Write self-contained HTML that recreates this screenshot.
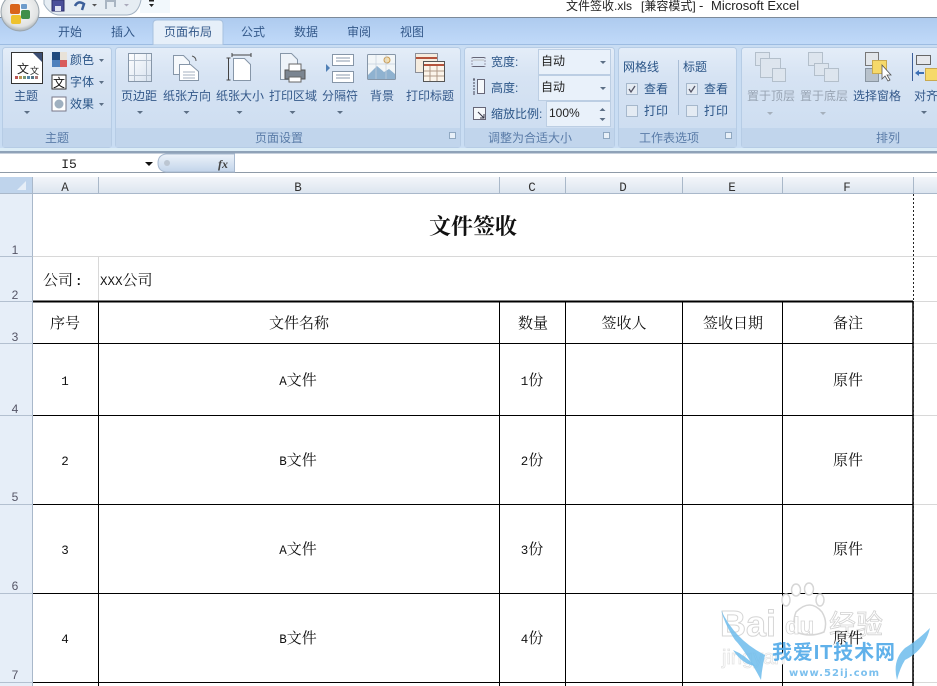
<!DOCTYPE html>
<html><head><meta charset="utf-8"><style>
html,body{margin:0;padding:0;background:#fff}
svg{display:block}
text{font-family:"Liberation Sans","Noto Sans CJK SC",sans-serif}
.r{font-size:12px;fill:#2b5587}
.t{font-size:12px;fill:#34598a;text-anchor:middle}
.g{font-size:12px;fill:#5a7ca8;text-anchor:middle}
.d{font-size:12px;fill:#98a4b3;text-anchor:middle}
.c{font-size:15px;fill:#111;text-anchor:middle;font-family:"Noto Serif CJK SC",serif}
.c tspan{font-family:"Liberation Mono",monospace;font-size:12.500px}
.h{font-size:12.500px;fill:#333;text-anchor:middle;font-family:"Liberation Mono",monospace}
.n{font-size:12px;fill:#556;text-anchor:middle}
</style></head><body>
<svg width="937" height="686" viewBox="0 0 937 686" xmlns="http://www.w3.org/2000/svg">
<defs>
<linearGradient id="grp" x1="0" y1="0" x2="0" y2="1"><stop offset="0" stop-color="#e4edf8"/><stop offset=".3" stop-color="#d6e3f3"/><stop offset="1" stop-color="#cbdcf0"/></linearGradient>
<linearGradient id="tabs" x1="0" y1="0" x2="0" y2="1"><stop offset="0" stop-color="#aecbef"/><stop offset="1" stop-color="#c1daf9"/></linearGradient>
<linearGradient id="hdr" x1="0" y1="0" x2="0" y2="1"><stop offset="0" stop-color="#f3f6fa"/><stop offset="1" stop-color="#dbe4ef"/></linearGradient>
<linearGradient id="fx" x1="0" y1="0" x2="0" y2="1"><stop offset="0" stop-color="#edf3fa"/><stop offset="1" stop-color="#c2d4ea"/></linearGradient>
<linearGradient id="pg" x1="0" y1="0" x2="1" y2="1"><stop offset="0" stop-color="#fff"/><stop offset="1" stop-color="#d7e2ef"/></linearGradient>
<radialGradient id="orb" cx=".5" cy=".4" r=".6"><stop offset="0" stop-color="#fff"/><stop offset=".8" stop-color="#e0e2e2"/><stop offset="1" stop-color="#a5aeb5"/></radialGradient>
</defs>

<!-- title bar -->
<rect width="937" height="17" fill="#fff"/>
<rect x="140" y="0" width="30" height="13" fill="#f2f8fc"/>
<text x="566" y="10" font-size="12" fill="#222">文件签收.xls</text>
<text x="641" y="10" font-size="12" fill="#222">[兼容模式]</text>
<text x="699" y="10" font-size="13" fill="#222">-</text>
<text x="711" y="10" font-size="13" fill="#222">Microsoft Excel</text>
<path d="M44 0V4Q50 15 60 15H126Q138 15 141 0" fill="#e6edf3" stroke="#a3b2c2"/>
<rect x="52" y="0" width="12" height="11" fill="#4a4f9a" stroke="#2c2f6a"/><rect x="55" y="6" width="6" height="5" fill="#dfe3f2"/>
<path d="M75 6Q78 0 84 4L82 10" fill="none" stroke="#3c5f9a" stroke-width="2.500"/>
<path d="M92 4h5l-2.500 2.500z" fill="#555"/>
<path d="M106 9V1h9v6" fill="none" stroke="#a9b5c2" stroke-width="2"/>
<path d="M124 4h5l-2.500 2.500z" fill="#aab"/>
<rect x="149" y="0" width="5" height="1.500" fill="#222"/><path d="M149 4h5l-2.500 3z" fill="#222"/>
<rect y="17" width="937" height="1" fill="#7d8a99"/>

<!-- tab strip -->
<rect y="18" width="937" height="27" fill="url(#tabs)"/>
<rect y="44" width="937" height="1" fill="#9dbce2"/>
<path d="M153 45V24Q153 20 157 20H219Q223 20 223 24V45Z" fill="#e6eff9" stroke="#a7c1df"/>
<text class="t" x="70" y="36">开始</text><text class="t" x="123" y="36">插入</text><text class="t" x="188" y="36">页面布局</text><text class="t" x="253" y="36">公式</text><text class="t" x="306" y="36">数据</text><text class="t" x="359" y="36">审阅</text><text class="t" x="412" y="36">视图</text>

<!-- office orb -->
<circle cx="20" cy="12" r="19" fill="url(#orb)" stroke="#9aa5ad"/>
<rect x="10" y="4" width="10" height="10" rx="2" fill="#d9651c"/><rect x="21" y="10" width="9" height="9" rx="2" fill="#3f8f4a"/><rect x="11" y="15" width="10" height="9" rx="2" fill="#eec22e"/><rect x="21" y="4" width="6" height="5" rx="1" fill="#6f9ccb"/>

<!-- ribbon body -->
<rect y="45" width="937" height="106" fill="#c9ddf3"/>
<rect y="151" width="937" height="2.500" fill="#8fa2b8"/>
<rect y="148" width="937" height="3" fill="#dcedf7"/>

<!-- groups -->
<g stroke="#b6cce5" fill="url(#grp)">
<rect x="2.500" y="47.500" width="109" height="100" rx="3"/>
<rect x="115.500" y="47.500" width="345" height="100" rx="3"/>
<rect x="464.500" y="47.500" width="150" height="100" rx="3"/>
<rect x="618.500" y="47.500" width="118" height="100" rx="3"/>
<rect x="741.500" y="47.500" width="200" height="100" rx="3"/>
</g>
<g fill="#c1d5ec">
<rect x="3" y="128" width="108" height="19"/><rect x="116" y="128" width="344" height="19"/><rect x="465" y="128" width="149" height="19"/><rect x="619" y="128" width="117" height="19"/><rect x="742" y="128" width="195" height="19"/>
</g>
<text class="g" x="57" y="142">主题</text><text class="g" x="279" y="142">页面设置</text><text class="g" x="530" y="142">调整为合适大小</text><text class="g" x="669" y="142">工作表选项</text><text class="g" x="888" y="142">排列</text>
<g fill="#e8f0f8" stroke="#7f99b5" stroke-width=".8"><rect x="449.500" y="132.500" width="6" height="6"/><rect x="603.500" y="132.500" width="6" height="6"/><rect x="725.500" y="132.500" width="6" height="6"/></g>

<!-- theme -->
<rect x="11.500" y="52.500" width="31" height="31" fill="#fff" stroke="#333"/>
<path d="M33 53h9v9z" fill="#3c4f75"/>
<text x="17" y="73" font-size="12" fill="#222">文</text><text x="30" y="74" font-size="9" fill="#222">文</text>
<g><rect x="15" y="76" width="3" height="3" fill="#b55"/><rect x="19" y="76" width="3" height="3" fill="#b95"/><rect x="23" y="76" width="3" height="3" fill="#797"/><rect x="27" y="76" width="3" height="3" fill="#58a"/><rect x="31" y="76" width="3" height="3" fill="#578"/><rect x="35" y="76" width="3" height="3" fill="#a77"/></g>
<text class="t" x="26" y="100">主题</text>
<path d="M24 111h6l-3 3z" fill="#5c6f85"/>
<rect x="52" y="52" width="15" height="15" fill="#d85c5c"/><rect x="52" y="52" width="8" height="8" fill="#1f497d"/><rect x="60" y="52" width="7" height="8" fill="#e8e2d8"/><rect x="52" y="60" width="8" height="7" fill="#4f81bd"/>
<text class="r" x="70" y="64">颜色</text><path d="M99 59h5l-2.500 3z" fill="#5c6f85"/>
<rect x="52" y="75" width="14" height="14" fill="#fff" stroke="#333"/><text x="53" y="87" font-size="12" fill="#111">文</text>
<text class="r" x="70" y="86">字体</text><path d="M99 81h5l-2.500 3z" fill="#5c6f85"/>
<rect x="52" y="97" width="14" height="14" fill="#fff" stroke="#778"/><circle cx="59" cy="104" r="4.500" fill="#9fb0c0"/>
<text class="r" x="70" y="108">效果</text><path d="M99 103h5l-2.500 3z" fill="#5c6f85"/>

<!-- page setup icons -->
<rect x="128.500" y="53.500" width="23" height="28" fill="url(#pg)" stroke="#8696a8"/><path d="M134.500 54v27M146.500 54v27M129 60.500h22M129 75.500h22" stroke="#b3bfcd" fill="none"/>
<path d="M173.500 55.500h10l6 6v13h-16z" fill="#f6f9fc" stroke="#8696a8"/><path d="M179.500 64.500h11l8 7v9h-19z" fill="#fff" stroke="#8696a8"/><path d="M183 72h12M183 75h12M183 78h12" stroke="#a5b2c2"/><path d="M192 56q4 1 4 5" fill="none" stroke="#555"/>
<path d="M228.500 58v22M226.500 58h4M226.500 80h4M232 55h19M232 53v4M251 53v4" stroke="#444" fill="none"/><path d="M233.500 58.500h11l6 6v16h-17z" fill="#fff" stroke="#8696a8"/>
<path d="M280.500 53.500h11l6 6v20h-17z" fill="#eef3f9" stroke="#8696a8"/><rect x="285" y="70" width="20" height="9" fill="#7b8591" stroke="#555"/><rect x="289" y="64" width="12" height="7" fill="#fff" stroke="#666"/><rect x="289" y="77" width="12" height="5" fill="#fff" stroke="#666"/>
<rect x="332.500" y="54.500" width="21" height="11" fill="#fff" stroke="#8696a8"/><rect x="332.500" y="71.500" width="21" height="11" fill="#fff" stroke="#8696a8"/><path d="M336 58h14M336 61h14M336 75h14M336 78h14" stroke="#8a9aae"/><path d="M326 64l4 4-4 4z" fill="#4f7fb5"/>
<rect x="367.500" y="54.500" width="28" height="25" rx="1" fill="#f2f6f8" stroke="#8696a8"/><path d="M368 75l9-9 7 6 5-3 6 5v5h-27z" fill="#8fb2d0"/><circle cx="387" cy="60" r="3" fill="#f4dfb0" stroke="#c79a55"/><path d="M376 55v24M386 55v24M368 64h27" stroke="#c5d0dc" fill="none" stroke-width=".7"/>
<rect x="415.500" y="53.500" width="22" height="19" fill="#f5ecdf" stroke="#8c8f98"/><path d="M416 58h21" stroke="#b5533c" stroke-width="2"/><rect x="423.500" y="61.500" width="21" height="20" fill="#fbf4ea" stroke="#555"/><path d="M424 65h20" stroke="#b5533c" stroke-width="2"/><path d="M430 66v15M437 66v15M424 71h20M424 76h20" stroke="#b09a88" fill="none"/>
<text class="t" x="139" y="100">页边距</text><text class="t" x="187" y="100">纸张方向</text><text class="t" x="240" y="100">纸张大小</text><text class="t" x="293" y="100">打印区域</text><text class="t" x="340" y="100">分隔符</text><text class="t" x="382" y="100">背景</text><text class="t" x="430" y="100">打印标题</text>
<g fill="#5c6f85"><path d="M137 111h6l-3 3z"/><path d="M183.500 111h6l-3 3z"/><path d="M236.500 111h6l-3 3z"/><path d="M289.500 111h6l-3 3z"/><path d="M337 111h6l-3 3z"/></g>

<!-- scale group -->
<path d="M472 57.500h13M472 66.500h13" stroke="#667" fill="none"/><path d="M472 57v10M485 57v10" stroke="#99a" stroke-dasharray="2 1"/><path d="M473 60h11" stroke="#bbb"/>
<path d="M473 79h3M473 94h3M474 79v15" stroke="#445" fill="none" stroke-dasharray="2 1"/><rect x="477.500" y="79.500" width="7" height="14" fill="#f5f8fb" stroke="#667"/>
<rect x="473.500" y="107.500" width="12" height="12" fill="#f5f8fb" stroke="#667"/><path d="M478 112l6 6M484 114v4h-4" stroke="#334" fill="none"/>
<text class="r" x="491" y="66">宽度:</text><text class="r" x="491" y="92">高度:</text><text class="r" x="491" y="118">缩放比例:</text>
<g fill="#e9f1fa" stroke="#bccee3"><rect x="538.500" y="49.500" width="72" height="25"/><rect x="538.500" y="75.500" width="72" height="25"/><rect x="546.500" y="101.500" width="64" height="25"/></g>
<text x="541" y="65" font-size="12" fill="#222">自动</text><text x="541" y="91" font-size="12" fill="#222">自动</text><text x="549" y="117" font-size="12" fill="#222">100%</text>
<g fill="#5c6f85"><path d="M600 61h6l-3 3z"/><path d="M600 87h6l-3 3z"/><path d="M599.500 111h6l-3-3z"/><path d="M599.500 118h6l-3 3z"/></g>

<!-- sheet options -->
<text class="r" x="623" y="71">网格线</text><text class="r" x="683" y="71">标题</text>
<path d="M678.500 60v55" stroke="#a9bdd5"/>
<g fill="#e4ebf3" stroke="#a6b8cc"><rect x="626.500" y="83.500" width="11" height="11"/><rect x="626.500" y="105.500" width="11" height="11"/><rect x="686.500" y="83.500" width="11" height="11"/><rect x="686.500" y="105.500" width="11" height="11"/></g>
<path d="M629 89l2 3 4-6M689 89l2 3 4-6" fill="none" stroke="#556" stroke-width="1.300"/>
<text class="r" x="644" y="93">查看</text><text class="r" x="644" y="115">打印</text><text class="r" x="704" y="93">查看</text><text class="r" x="704" y="115">打印</text>

<!-- arrange -->
<g fill="#dde5ee" stroke="#b3bfcb"><rect x="755.500" y="52.500" width="14" height="13"/><rect x="760.500" y="58.500" width="20" height="19"/><rect x="772.500" y="68.500" width="13" height="13"/>
<rect x="808.500" y="52.500" width="14" height="13"/><rect x="814.500" y="63.500" width="14" height="12"/><rect x="824.500" y="68.500" width="14" height="13"/></g>
<rect x="865.500" y="52.500" width="13" height="13" fill="#e2e6ea" stroke="#777"/><rect x="865.500" y="68.500" width="13" height="13" fill="#b8c2cc" stroke="#8a96a2"/><rect x="872.500" y="60.500" width="14" height="13" fill="#f6d96a" stroke="#c9a94f"/>
<path d="M882 65v14l3-3 3 5 2-1-3-5h4z" fill="#fff" stroke="#555" stroke-width=".8"/>
<path d="M912.500 53v28" stroke="#3c5f9a"/><rect x="916.500" y="55.500" width="14" height="9" fill="#e6e8ec" stroke="#666"/><rect x="925.500" y="68.500" width="14" height="12" fill="#f6d96a" stroke="#c9a94f"/><path d="M915 73l4-3v2h5v2h-5v2z" fill="#3c6fb5"/>
<text class="d" x="771" y="100">置于顶层</text><text class="d" x="824" y="100">置于底层</text><text class="t" x="877" y="100">选择窗格</text><text class="t" x="926" y="100">对齐</text>
<path d="M767 112h6l-3 3zM820 112h6l-3 3z" fill="#a5b0bc"/><path d="M921 111h6l-3 3z" fill="#5c6f85"/>

<!-- formula bar -->
<rect y="153.500" width="937" height="18.500" fill="#fff"/>
<rect y="172" width="937" height="1" fill="#8f9ba8"/>
<text x="69" y="168" text-anchor="middle" style="font-family:'Liberation Mono',monospace;font-size:13px" fill="#222">I5</text>
<path d="M145 162h8l-4 4z" fill="#111"/>
<path d="M234.500 154v18H166q-8-1-8-9t8-9z" fill="url(#fx)" stroke="#a9bad0"/>
<circle cx="167" cy="163" r="3" fill="#bcc6d2"/>
<text x="218" y="168" font-size="12" font-style="italic" font-weight="bold" fill="#444" style="font-family:'Liberation Serif',serif">fx</text>

<!-- sheet header -->
<rect y="173" width="937" height="4" fill="#fff"/>
<rect y="177" width="937" height="17" fill="url(#hdr)"/>
<rect y="194" width="33" height="492" fill="#e6eef8"/>
<rect y="177" width="33" height="17" fill="#bfd4ec"/>
<path d="M26 181v9h-9z" fill="#e6eef7"/>
<path d="M0 193.500H937" stroke="#a9b8ca"/>
<path d="M32.500 177V686" stroke="#a9b8ca"/>
<path d="M98.500 177v17M499.500 177v17M565.500 177v17M682.500 177v17M782.500 177v17M913.500 177v17" stroke="#a9b8c9"/>
<text class="h" x="65" y="191">A</text><text class="h" x="298" y="191">B</text><text class="h" x="532" y="191">C</text><text class="h" x="623" y="191">D</text><text class="h" x="732" y="191">E</text><text class="h" x="847" y="191">F</text>
<path d="M0 256.500h33M0 301.500h33M0 343.500h33M0 415.500h33M0 504.500h33M0 593.500h33M0 682.500h33" stroke="#b3c0d0"/>
<text class="n" x="15" y="254">1</text><text class="n" x="15" y="299">2</text><text class="n" x="15" y="341">3</text><text class="n" x="15" y="413">4</text><text class="n" x="15" y="501">5</text><text class="n" x="15" y="590">6</text><text class="n" x="15" y="679">7</text>

<!-- grid -->
<path d="M33 256.500H937M98.500 256V301M913 301.500H937M913 343.500H937M913 415.500H937M913 504.500H937M913 593.500H937M913 682.500H937" stroke="#d8d8d8"/>
<path d="M33 301.500H913" stroke="#000" stroke-width="2"/>
<path d="M33 343.500H913M33 415.500H913M33 504.500H913M33 593.500H913M33 682.500H913M98.500 301V686M499.500 301V686M565.500 301V686M682.500 301V686M782.500 301V686" stroke="#000"/>
<path d="M913 301V686" stroke="#000" stroke-width="1.500"/>
<path d="M913.500 194V686" stroke="#222" stroke-dasharray="2 2"/>

<!-- watermark (behind text) -->
<text x="720" y="636" font-size="36" font-weight="bold" fill="#fff" stroke="#d6d6d6" stroke-width="1">Bai</text>
<path d="M796 612q14-14 26 0q6 10 2 20q-14 6-28 0q-4-10 0-20z" fill="#fff" stroke="#d6d6d6" stroke-width="1.500"/>
<text x="785" y="634" font-size="24" font-weight="bold" fill="#fff" stroke="#d6d6d6" stroke-width=".8">du</text>
<text x="829" y="634" font-size="27" fill="#fff" stroke="#d2d2d2" stroke-width=".8">经验</text>
<text x="722" y="664" font-size="20" fill="#fff" stroke="#e4e4e4" stroke-width=".8">jingyan</text>
<g fill="#fff" stroke="#d6d6d6" stroke-width="1.500"><ellipse cx="786" cy="600" rx="4" ry="6"/><ellipse cx="796" cy="590" rx="4.500" ry="6"/><ellipse cx="809" cy="589" rx="4.500" ry="6"/><ellipse cx="820" cy="600" rx="4" ry="6"/></g>

<!-- cells -->
<text x="473" y="234" text-anchor="middle" font-size="22" font-weight="bold" fill="#111" style="font-family:'Noto Serif CJK SC',serif">文件签收</text>
<text class="c" x="43" y="285" style="text-anchor:start">公司</text><text class="c" x="75" y="285" style="text-anchor:start"><tspan style="font-weight:bold">:</tspan></text>
<text class="c" x="100" y="285" style="text-anchor:start"><tspan>XXX</tspan>公司</text>
<text class="c" x="65" y="328">序号</text><text class="c" x="299" y="328">文件名称</text><text class="c" x="533" y="328">数量</text><text class="c" x="624" y="328">签收人</text><text class="c" x="733" y="328">签收日期</text><text class="c" x="848" y="328">备注</text>
<text class="c" x="65" y="385"><tspan>1</tspan></text><text class="c" x="298" y="385"><tspan>A</tspan>文件</text><text class="c" x="532" y="385"><tspan>1</tspan>份</text><text class="c" x="848" y="385">原件</text>
<text class="c" x="65" y="465"><tspan>2</tspan></text><text class="c" x="298" y="465"><tspan>B</tspan>文件</text><text class="c" x="532" y="465"><tspan>2</tspan>份</text><text class="c" x="848" y="465">原件</text>
<text class="c" x="65" y="554"><tspan>3</tspan></text><text class="c" x="298" y="554"><tspan>A</tspan>文件</text><text class="c" x="532" y="554"><tspan>3</tspan>份</text><text class="c" x="848" y="554">原件</text>
<text class="c" x="65" y="643"><tspan>4</tspan></text><text class="c" x="298" y="643"><tspan>B</tspan>文件</text><text class="c" x="532" y="643"><tspan>4</tspan>份</text><text class="c" x="848" y="643">原件</text>

<!-- watermark blue -->
<path d="M721 610Q735 640 765 655Q762 668 761 680Q745 650 735 640Q725 625 721 610Z" fill="#6dbcec" opacity=".85"/>
<path d="M733 650Q745 655 755 666Q742 664 733 650Z" fill="#6dbcec" opacity=".85"/>
<path d="M930 628Q925 650 905 660Q900 668 897 680Q892 660 905 648Q918 640 930 628Z" fill="#6dbcec" opacity=".85"/>
<text x="772" y="659" font-size="20" font-weight="bold" fill="#4fa9e8" opacity=".9" textLength="123">我爱IT技术网</text>
<text x="789" y="676" font-size="10" font-weight="bold" fill="#7cc0ee" textLength="90" style="font-family:'DejaVu Sans',sans-serif">www.52ij.com</text>
</svg>
</body></html>
